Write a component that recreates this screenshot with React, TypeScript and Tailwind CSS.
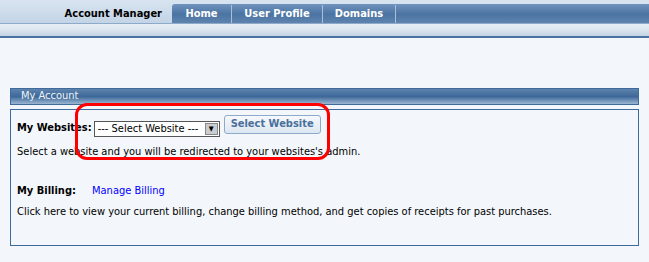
const font = "font-['Tahoma','DejaVu_Sans_Condensed','DejaVu_Sans',sans-serif]";

function Tab({ label, width }: { label: string; width: string }) {
	return (
		<div
			className={`${width} flex h-full items-center justify-center border-r border-[#a9bfd8] text-[11px] font-bold text-white`}
		>
			{label}
		</div>
	);
}

export default function App() {
	return (
		<div className={`${font} relative h-[262px] w-[649px] overflow-hidden bg-[#f3f7fb] text-[11px] text-black`}>
			{/* top navigation */}
			<div className="flex h-[23px] items-end bg-gradient-to-b from-[#d8e4f0] to-[#c3d4e6]">
				<div className="flex h-[18px] w-[172px] items-center justify-end pr-[10px] text-[11px] font-bold">
					Account Manager
				</div>
				<div className="flex h-[19px] flex-1 rounded-tl-[3px] border-t border-[#6f93bd] bg-gradient-to-b from-[#6d90bb] via-[#4b74a3] to-[#5f83ae]">
					<Tab label="Home" width="w-[60px]" />
					<Tab label="User Profile" width="w-[91px]" />
					<Tab label="Domains" width="w-[73px]" />
				</div>
			</div>
			<div className="h-[15px] border-t border-b-2 border-t-[#8eaacb] border-b-[#4a72a0] bg-gradient-to-b from-[#e8eef5] via-[#dbe5ef] to-[#c4d3e3]" />

			{/* account panel */}
			<div className="mx-[10px] mt-[50px]">
				<div className="flex h-[17px] items-center border border-[#3f6b9c] bg-gradient-to-b from-[#5e84ae] via-[#3d6898] to-[#9cb6d2] pl-[10px] text-[11px] text-[#eef3f9]">
					My Account
				</div>
				<div className="mt-[4px] h-[137px] border border-[#3f6b9c] px-[6px] pt-[5px]">
					<div className="flex h-[22px] items-start">
						<span className="mr-[2px] mt-[6px] text-[11px] font-bold leading-[14px]">My Websites:</span>
						<div className="mt-[6px] flex h-[16px] w-[126px] items-center border border-[#555] bg-white pl-[3px]">
							<span className="flex-1 text-[11px]">--- Select Website ---</span>
							<span className="mr-[1px] flex h-[12px] w-[13px] items-center justify-center border border-[#888] bg-[#c9ccd0] text-[7px]">
								▼
							</span>
						</div>
						<button
							type="button"
							className="ml-[4px] h-[19px] w-[97px] rounded-[3px] border border-[#8eaacb] bg-gradient-to-b from-[#f6f9fc] to-[#dde7f1] text-[11px] font-bold text-[#4a6f9a]"
						>
							Select Website
						</button>
					</div>
					<p className="mt-[8px] leading-[14px]">
						Select a website and you will be redirected to your websites's admin.
					</p>
					<div className="mt-[25px] flex items-center leading-[14px]">
						<span className="w-[75px] text-[11px] font-bold">My Billing:</span>
						<a className="text-[#0000ff]">Manage Billing</a>
					</div>
					<p className="mt-[7px] leading-[14px]">
						Click here to view your current billing, change billing method, and get copies of receipts for past purchases.
					</p>
				</div>
			</div>

			{/* red highlight annotation */}
			<div className="absolute left-[75px] top-[103px] h-[57px] w-[255px] rounded-[12px] border-[3px] border-[#ff0000]" />
		</div>
	);
}
